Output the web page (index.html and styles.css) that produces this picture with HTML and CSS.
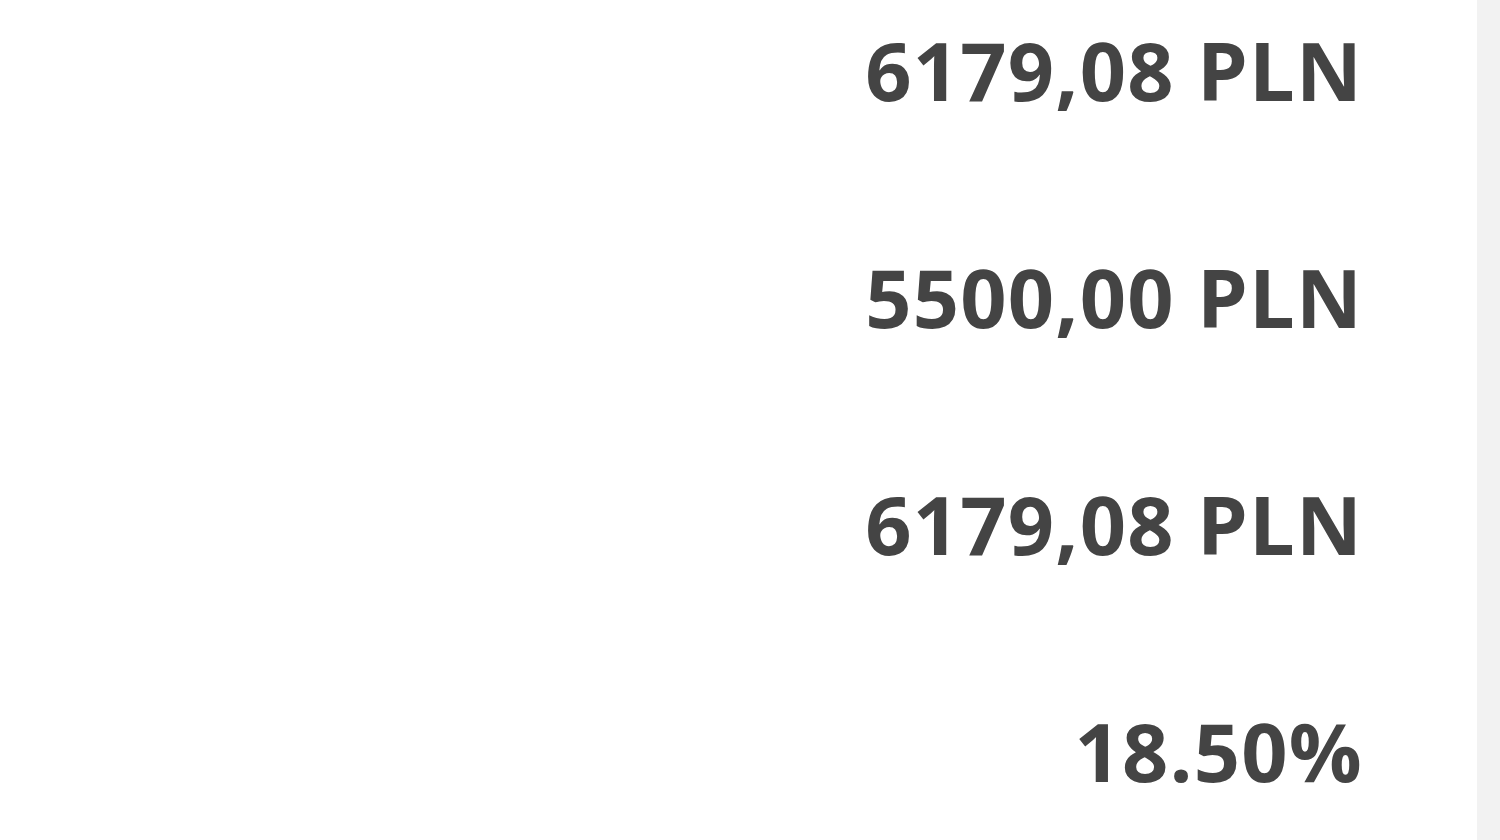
FILE: index.html
```html
<!DOCTYPE html>
<html lang="pl">
<head>
<meta charset="utf-8">
<link rel="stylesheet" href="styles.css">
</head>
<body>
<div class="page">
  <main class="main">
    <div class="values">
      <div class="value">6179,08 PLN</div>
      <div class="value">5500,00 PLN</div>
      <div class="value">6179,08 PLN</div>
      <div class="value">18.50%</div>
    </div>
  </main>
  <aside class="side"></aside>
</div>
</body>
</html>
```
FILE: styles.css
```css
html, body {
  margin: 0;
  padding: 0;
  background: #ffffff;
}
.page {
  display: flex;
  width: 1500px;
  height: 840px;
  overflow: hidden;
}
.main {
  flex: 1;
  background: #ffffff;
  display: flex;
  justify-content: flex-end;
  padding-right: 114px;
}
.values {
  display: flex;
  flex-direction: column;
  align-items: flex-end;
  gap: 116px;
  padding-top: 14px;
}
.value {
  font-family: "Open Sans", sans-serif;
  font-weight: 700;
  font-size: 81px;
  letter-spacing: 1.2px;
  line-height: normal;
  color: #444444;
}
.side {
  width: 23px;
  background: #f2f2f2;
}
```
